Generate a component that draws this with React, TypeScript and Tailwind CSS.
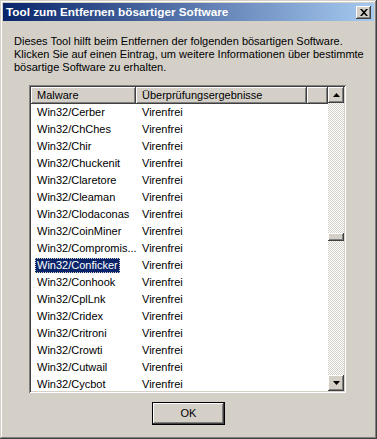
import React from "react";

const rows = [
  "Win32/Cerber",
  "Win32/ChChes",
  "Win32/Chir",
  "Win32/Chuckenit",
  "Win32/Claretore",
  "Win32/Cleaman",
  "Win32/Clodaconas",
  "Win32/CoinMiner",
  "Win32/Compromis...",
  "Win32/Conficker",
  "Win32/Conhook",
  "Win32/CplLnk",
  "Win32/Cridex",
  "Win32/Critroni",
  "Win32/Crowti",
  "Win32/Cutwail",
  "Win32/Cycbot",
];

const raised =
  "shadow-[inset_-1px_-1px_#404040,inset_1px_1px_#ffffff,inset_-2px_-2px_#808080,inset_2px_2px_#d4d0c8]";

function ScrollBtn({ up }: { up: boolean }) {
  return (
    <div className={`w-[16px] h-[16px] bg-[#d4d0c8] flex items-center justify-center ${raised}`}>
      <svg width="7" height="4" viewBox="0 0 7 4">
        {up ? <path d="M3.5 0 L7 4 L0 4 Z" fill="#000" /> : <path d="M0 0 L7 0 L3.5 4 Z" fill="#000" />}
      </svg>
    </div>
  );
}

export default function App() {
  return (
    <div
      className="w-[377px] h-[439px] bg-[#d4d0c8] p-[3px] flex flex-col text-black shadow-[inset_-1px_-1px_#404040,inset_1px_1px_#d4d0c8,inset_-2px_-2px_#808080,inset_2px_2px_#ffffff]"
      style={{ fontFamily: '"Liberation Sans", Arial, sans-serif' }}
    >
      {/* Title bar */}
      <div className="h-[18px] flex items-center justify-between pl-[3px] pr-[3px] bg-[linear-gradient(to_right,#0a246a,#a6caf0)]">
        <span className="text-white font-bold text-[11.75px] leading-[18px]">
          Tool zum Entfernen bösartiger Software
        </span>
        <div className={`w-[15px] h-[13px] bg-[#d4d0c8] flex items-center justify-center ${raised}`}>
          <svg width="8" height="7" viewBox="0 0 8 7">
            <path d="M0 0h2l2 2.2L6 0h2L5 3.5 8 7H6L4 4.8 2 7H0l3-3.5z" fill="#000" />
          </svg>
        </div>
      </div>

      {/* Description */}
      <div className="mt-[14px] ml-[11px] text-[11px] leading-[13px]">
        Dieses Tool hilft beim Entfernen der folgenden bösartigen Software.
        <br />
        Klicken Sie auf einen Eintrag, um weitere Informationen über bestimmte
        <br />
        bösartige Software zu erhalten.
      </div>

      {/* List */}
      <div className="mt-[11px] ml-[26px] w-[317px] h-[308px] p-[2px] bg-white shadow-[inset_1px_1px_#808080,inset_-1px_-1px_#ffffff,inset_2px_2px_#404040,inset_-2px_-2px_#d4d0c8] flex">
        <div className="flex-1 flex flex-col overflow-hidden text-[11px]">
          <div className="h-[17px] flex shrink-0">
            <div className={`w-[105px] h-full bg-[#d4d0c8] pl-[6px] flex items-center ${raised}`}>Malware</div>
            <div className={`w-[171px] h-full bg-[#d4d0c8] pl-[6px] flex items-center ${raised}`}>
              Überprüfungsergebnisse
            </div>
            <div className={`flex-1 h-full bg-[#d4d0c8] ${raised}`} />
          </div>
          {rows.map((r) => (
            <div key={r} className="h-[17px] flex items-center shrink-0">
              <div className="w-[105px] pl-[4px] flex">
                {r === "Win32/Conficker" ? (
                  <span className="bg-[#0a246a] text-white px-[2px] leading-[15px] outline-1 outline-dotted outline-[#d4d0c8] -outline-offset-1">
                    {r}
                  </span>
                ) : (
                  <span className="px-[2px] leading-[15px]">{r}</span>
                )}
              </div>
              <div className="pl-[6px]">Virenfrei</div>
            </div>
          ))}
        </div>
        <div className="w-[16px] flex flex-col">
          <ScrollBtn up />
          <div className="flex-1 flex flex-col bg-[conic-gradient(#d4d0c8_25%,#ffffff_0_50%,#d4d0c8_0_75%,#ffffff_0)] bg-[length:2px_2px]">
            <div className="h-[130px]" />
            <div className={`h-[8px] bg-[#d4d0c8] ${raised}`} />
            <div className="flex-1" />
          </div>
          <ScrollBtn up={false} />
        </div>
      </div>

      {/* Button */}
      <div className="mt-[9px] flex justify-center">
        <div className="w-[73px] h-[23px] border border-black">
          <div
            className={`w-full h-full bg-[#d4d0c8] flex items-center justify-center text-[11px] ${raised}`}
          >
            OK
          </div>
        </div>
      </div>
    </div>
  );
}
